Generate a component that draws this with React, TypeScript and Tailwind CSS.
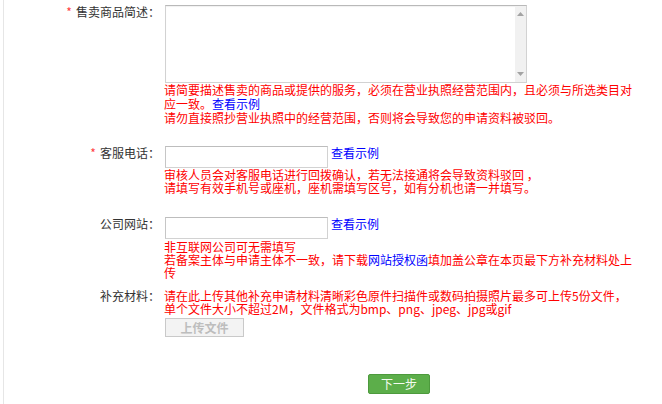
import React from 'react';

const Star = () => <span className="text-[#ff4040] mr-[4px]">*</span>;

function Label({ required, text }: { required?: boolean; text: string }) {
  return (
    <div className="w-[156px] shrink-0 text-right text-[#333] leading-[14px] whitespace-nowrap">
      {required && <Star />}
      {text}：
    </div>
  );
}

const Link = ({ children }: { children: React.ReactNode }) => (
  <a href="#" className="text-[#0000ff]">
    {children}
  </a>
);

function Scrollbar() {
  return (
    <div className="w-[11px] shrink-0 bg-[#f1f1f1] flex flex-col items-center justify-between py-[6px]">
      <svg width="7" height="4" viewBox="0 0 7 4">
        <path d="M3.5 0 L7 4 L0 4 Z" fill="#a3a3a3" />
      </svg>
      <svg width="7" height="4" viewBox="0 0 7 4">
        <path d="M0 0 L7 0 L3.5 4 Z" fill="#a3a3a3" />
      </svg>
    </div>
  );
}

export default function App() {
  return (
    <div className="w-[662px] h-[404px] bg-white pl-[3px] font-['Microsoft_YaHei','Noto_Sans_CJK_SC',sans-serif] text-[12px]">
      <div className="h-full border-l border-[#e6e6e6] pt-[5px]">
        {/* 售卖商品简述 */}
        <div className="flex">
          <Label required text="售卖商品简述" />
          <div className="ml-[4px]">
            <div className="ml-[1px] w-[362px] h-[78px] flex border border-[#d2d2d2] border-t-[#b9b9b9] shadow-[inset_0_1px_1px_rgba(0,0,0,0.06)] bg-white">
              <textarea className="flex-1 resize-none outline-none bg-transparent" />
              <Scrollbar />
            </div>
            <div className="text-[#ff0000] leading-[14px] whitespace-nowrap">
              <div>请简要描述售卖的商品或提供的服务，必须在营业执照经营范围内，且必须与所选类目对</div>
              <div>
                应一致。<Link>查看示例</Link>
              </div>
              <div>请勿直接照抄营业执照中的经营范围，否则将会导致您的申请资料被驳回。</div>
            </div>
          </div>
        </div>

        {/* 客服电话 */}
        <div className="flex mt-[21px]">
          <Label required text="客服电话" />
          <div className="ml-[4px]">
            <div className="flex items-start">
              <input className="ml-[1px] w-[163px] h-[22px] border border-[#d2d2d2] border-t-[#bdbdbd] border-l-[#c6c6c6] outline-none" />
              <span className="ml-[3px] leading-[14px]">
                <Link>查看示例</Link>
              </span>
            </div>
            <div className="text-[#ff0000] leading-[13px] whitespace-nowrap">
              <div>审核人员会对客服电话进行回拨确认，若无法接通将会导致资料驳回 ，</div>
              <div>请填写有效手机号或座机，座机需填写区号，如有分机也请一并填写。</div>
            </div>
          </div>
        </div>

        {/* 公司网站 */}
        <div className="flex mt-[23px]">
          <Label text="公司网站" />
          <div className="ml-[4px]">
            <div className="flex items-start">
              <input className="ml-[1px] w-[163px] h-[22px] border border-[#d2d2d2] border-t-[#bdbdbd] border-l-[#c6c6c6] outline-none" />
              <span className="ml-[3px] leading-[14px]">
                <Link>查看示例</Link>
              </span>
            </div>
            <div className="mt-[1px] text-[#ff0000] leading-[13px] whitespace-nowrap">
              <div>非互联网公司可无需填写</div>
              <div>
                若备案主体与申请主体不一致，请下载<Link>网站授权函</Link>填加盖公章在本页最下方补充材料处上
              </div>
              <div>传</div>
            </div>
          </div>
        </div>

        {/* 补充材料 */}
        <div className="flex mt-[10px]">
          <div className="w-[156px] shrink-0 text-right text-[#333] leading-[13px]">补充材料：</div>
          <div className="ml-[4px]">
            <div className="text-[#ff0000] leading-[13px] whitespace-nowrap">
              <div>请在此上传其他补充申请材料清晰彩色原件扫描件或数码拍摄照片最多可上传5份文件，</div>
              <div>单个文件大小不超过2M，文件格式为bmp、png、jpeg、jpg或gif</div>
            </div>
            <button className="mt-[3px] ml-[1px] w-[79px] h-[19px] bg-[#f3f3f3] border border-[#c9c9c9] text-[#bdbdbd] font-bold leading-[17px]">
              上传文件
            </button>
          </div>
        </div>

        {/* 下一步 */}
        <div className="mt-[37px] pl-[364px]">
          <button className="w-[62px] h-[20px] rounded-[2px] bg-[#5cae4a] border border-[#4d9a3d] text-[#f4fbf0] leading-[18px]">
            下一步
          </button>
        </div>
      </div>
    </div>
  );
}
